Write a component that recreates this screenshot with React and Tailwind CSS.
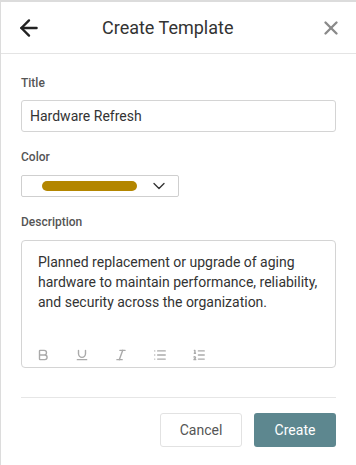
import { ArrowLeft, X, ChevronDown, Bold, Underline, Italic, List, ListOrdered } from 'lucide-react';

const font = { fontFamily: 'Roboto, "Liberation Sans", sans-serif' };

function Label({ children, className = '' }) {
  return <div className={`text-[12px] font-medium text-[#555] leading-4 ${className}`}>{children}</div>;
}

export default function App() {
  const tools = [Bold, Underline, Italic, List, ListOrdered];

  return (
    <div className="w-[356px] h-[465px] bg-white border-l border-t-2 border-[#dcdcdc] overflow-hidden" style={font}>
      <div className="h-[52px] flex items-center pl-[15px] pr-[14px] border-b border-[#e4e4e4]">
        <ArrowLeft size={26} strokeWidth={2.2} className="text-[#222]" />
        <div className="ml-[60px] text-[18px] text-[#333] leading-6">Create Template</div>
        <div className="flex-1" />
        <X size={22} strokeWidth={2.6} className="text-[#8a8a8a]" />
      </div>

      <div className="px-5 pt-[21px]">
        <Label className="mb-[9px]">Title</Label>
        <div className="h-[32px] border border-[#d4d4d4] rounded-[3px] flex items-center px-2 text-[14px] text-[#333]">
          Hardware Refresh
        </div>

        <Label className="mt-[17px] mb-[10px]">Color</Label>
        <div className="w-[158px] h-[22px] border border-[#cfcfcf] rounded-[2px] flex items-center pl-5 gap-[12px]">
          <div className="w-[95px] h-[10px] rounded-full bg-[#b38600]" />
          <ChevronDown size={20} strokeWidth={1.6} className="text-[#333]" />
        </div>

        <Label className="mt-[17px] mb-[10px]">Description</Label>
        <div className="h-[128px] border border-[#d4d4d4] rounded-[4px] flex flex-col justify-between pl-4 pr-3 pt-[11px] pb-[5px]">
          <p className="text-[14px] leading-5 text-[#333]">
            Planned replacement or upgrade of aging hardware to maintain performance, reliability, and security across the organization.
          </p>
          <div className="flex items-center gap-[25px] -ml-[2px]">
            {tools.map((Icon, i) => (
              <Icon key={i} size={14} strokeWidth={2.4} className="text-[#aaaaaa]" />
            ))}
          </div>
        </div>

        <div className="mt-[29px] border-t border-[#e6e6e6]" />

        <div className="flex justify-end gap-3 mt-[15px]">
          <button className="w-[82px] h-[34px] border border-[#e2e2e2] rounded-[3px] text-[14px] text-[#555] bg-white">
            Cancel
          </button>
          <button className="w-[82px] h-[34px] rounded-[3px] text-[14px] text-white bg-[#5d878f]">
            Create
          </button>
        </div>
      </div>
    </div>
  );
}
